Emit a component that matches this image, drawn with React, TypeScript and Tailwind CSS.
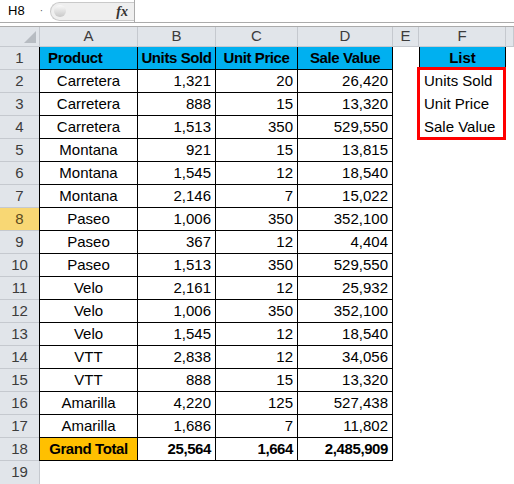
import { clsx } from "clsx";

type Row = [string, string, string, string];

const ROWS: Row[] = [
  ["Carretera", "1,321", "20", "26,420"],
  ["Carretera", "888", "15", "13,320"],
  ["Carretera", "1,513", "350", "529,550"],
  ["Montana", "921", "15", "13,815"],
  ["Montana", "1,545", "12", "18,540"],
  ["Montana", "2,146", "7", "15,022"],
  ["Paseo", "1,006", "350", "352,100"],
  ["Paseo", "367", "12", "4,404"],
  ["Paseo", "1,513", "350", "529,550"],
  ["Velo", "2,161", "12", "25,932"],
  ["Velo", "1,006", "350", "352,100"],
  ["Velo", "1,545", "12", "18,540"],
  ["VTT", "2,838", "12", "34,056"],
  ["VTT", "888", "15", "13,320"],
  ["Amarilla", "4,220", "125", "527,438"],
  ["Amarilla", "1,686", "7", "11,802"],
];

const LIST = ["Units Sold", "Unit Price", "Sale Value"];
const COLS = ["A", "B", "C", "D", "E", "F", ""];

const font = "font-['Liberation_Sans',Arial,sans-serif]";

function RowHead({ n, selected }: { n: number | string; selected?: boolean }) {
  return (
    <div
      className={clsx(
        "flex items-center justify-center border-b border-[#c5c9cf] text-[15px]",
        selected ? "bg-[#f8d774] text-[#5b4a1e]" : "bg-[#e1e5ea] text-[#3c3c3c]"
      )}
    >
      {n}
    </div>
  );
}

function Cell({
  children,
  align = "right",
  bold,
  bg,
}: {
  children?: React.ReactNode;
  align?: "left" | "center" | "right";
  bold?: boolean;
  bg?: string;
}) {
  return (
    <div
      className={clsx(
        "flex items-center border-r border-b border-black px-[4px] text-[15px] text-black whitespace-nowrap",
        align === "center" && "justify-center",
        align === "right" && "justify-end",
        bold && "font-bold tracking-[-0.4px]",
        bg
      )}
    >
      {children}
    </div>
  );
}

function FormulaBar() {
  return (
    <div className="border-b border-[#ababab]">
      <div className="flex h-[23px] items-center border-b border-[#ababab] bg-white">
        <div className="flex h-full w-[46px] items-center pl-[8px] text-[13px] text-black">
          H8
          <span className="ml-auto mr-[3px] text-[10px] leading-none text-[#555]">·</span>
        </div>
        <div className="ml-[4px] flex h-[19px] w-[84px] items-center rounded-l-[10px] border-y border-l border-[#c9c9c9] bg-[#efefef] pr-[6px]">
          <div className="ml-[3px] h-[12px] w-[12px] rounded-full bg-gradient-to-b from-[#fafafa] to-[#c8c8c8]" />
          <span className="ml-auto font-['Liberation_Serif',serif] text-[14px] font-bold italic text-[#333]">
            fx
          </span>
        </div>
        <div className="h-full w-px bg-[#ababab]" />
        <div className="flex-1" />
      </div>
      <div className="h-[3px] bg-white" />
    </div>
  );
}

export default function App() {
  return (
    <div className={clsx("relative h-[484px] w-[514px] overflow-hidden bg-white", font)}>
      <FormulaBar />
      <div className="grid grid-cols-[39px_99px_78px_82px_95px_26px_87px_1fr] grid-rows-[20px_repeat(18,23px)_24px]">
        {/* column headers */}
        <div className="relative border-b border-[#c5c9cf] bg-[#e1e5ea]">
          <div className="absolute bottom-[3px] right-[3px] h-0 w-0 border-b-[12px] border-l-[12px] border-b-[#b7bcc2] border-l-transparent" />
        </div>
        {COLS.map((c, i) => (
          <div
            key={i}
            className={clsx(
              "flex items-center justify-center border-r border-b border-[#c5c9cf] bg-[#e1e5ea] text-[15px] text-[#3c3c3c]",
              i === 0 && "border-l"
            )}
          >
            {c}
          </div>
        ))}

        {/* row 1 */}
        <RowHead n={1} />
        <div className="flex items-center border-x border-b border-black bg-[#00b0f0] pl-[8px] text-[15px] font-bold tracking-[-0.3px]">
          Product
        </div>
        <Cell align="center" bold bg="bg-[#00b0f0]">Units Sold</Cell>
        <Cell align="center" bold bg="bg-[#00b0f0]">Unit Price</Cell>
        <Cell align="center" bold bg="bg-[#00b0f0]">Sale Value</Cell>
        <div />
        <div className="flex items-center justify-center border-x border-b border-black bg-[#00b0f0] text-[15px] font-bold">
          List
        </div>
        <div />

        {/* data rows */}
        {ROWS.map((r, i) => (
          <div key={i} className="contents">
            <RowHead n={i + 2} selected={i + 2 === 8} />
            <div className="flex items-center justify-center border-x border-b border-black text-[15px]">
              {r[0]}
            </div>
            <Cell>{r[1]}</Cell>
            <Cell>{r[2]}</Cell>
            <Cell>{r[3]}</Cell>
            <div />
            <div className="flex items-center pl-[5px] text-[15px]">{LIST[i] ?? ""}</div>
            <div />
          </div>
        ))}

        {/* grand total */}
        <RowHead n={18} />
        <div className="flex items-center justify-center border-x border-b border-black bg-[#ffc000] text-[15px] font-bold tracking-[-0.4px]">
          Grand Total
        </div>
        <Cell bold>25,564</Cell>
        <Cell bold>1,664</Cell>
        <Cell bold>2,485,909</Cell>
        <div />
        <div />
        <div />

        {/* row 19 */}
        <RowHead n={19} />
        <div className="border-l border-[#c5c9cf]" />
        <div />
        <div />
        <div />
        <div />
        <div />
        <div />
      </div>

      {/* selection outline around F2:F4 */}
      <div className="pointer-events-none absolute left-[417px] top-[67px] h-[73px] w-[89px] border-[3px] border-[#ff0000]" />
    </div>
  );
}
